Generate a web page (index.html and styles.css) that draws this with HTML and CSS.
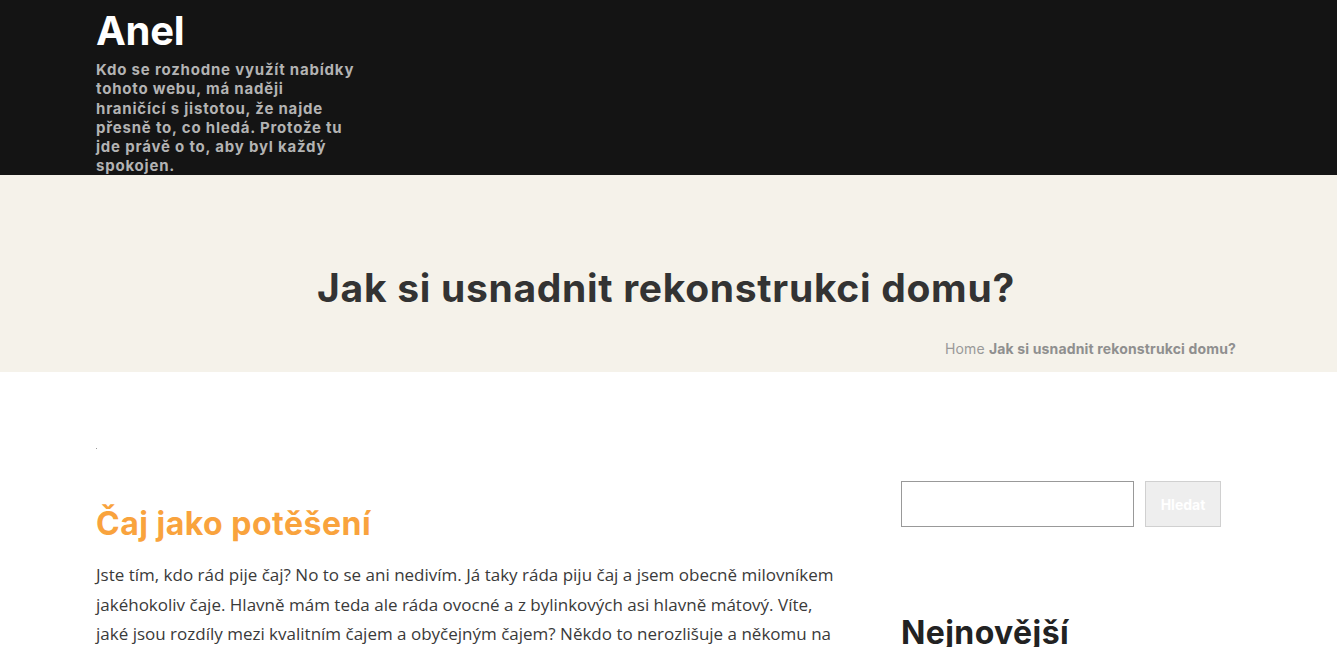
FILE: index.html
```html
<!DOCTYPE html>
<html lang="cs">
<head>
  <meta charset="UTF-8" />
  <meta name="viewport" content="width=device-width, initial-scale=1.0" />
  <title>Jak si usnadnit rekonstrukci domu? - Anel</title>
  <link rel="stylesheet" href="styles.css">
</head>
<body>
  <header class="site-header">
    <div class="container">
      <div class="site-title">Anel</div>
      <p class="site-desc">Kdo se rozhodne využít nabídky tohoto webu, má naději hraničící s jistotou, že najde přesně to, co hledá. Protože tu jde právě o to, aby byl každý spokojen.</p>
    </div>
  </header>

  <section class="page-head">
    <div class="container">
      <h1>Jak si usnadnit rekonstrukci domu?</h1>
      <div class="crumbs">Home <strong>Jak si usnadnit rekonstrukci domu?</strong></div>
    </div>
  </section>

  <div class="container main">
    <article class="post">
      <span class="pixel"></span>
      <h2>Čaj jako potěšení</h2>
      <p>Jste tím, kdo rád pije čaj? No to se ani nedivím. Já taky ráda piju čaj a jsem obecně milovníkem jakéhokoliv čaje. Hlavně mám teda ale ráda ovocné a z bylinkových asi hlavně mátový. Víte, jaké jsou rozdíly mezi kvalitním čajem a obyčejným čajem? Někdo to nerozlišuje a někomu na tom vůbec nezáleží, ale pro mě je to důležité.</p>
    </article>

    <aside class="sidebar">
      <form class="search" onsubmit="return false">
        <input type="text" />
        <button type="submit">Hledat</button>
      </form>
      <h3>Nejnovější</h3>
    </aside>
  </div>
</body>
</html>
```

FILE: styles.css
```css
body {
  font-family: 'Open Sans', sans-serif;
  margin: 0;
  background: #fff;
  color: #333;
}
.container {
  width: 1145px;
  margin: 0 auto;
  box-sizing: border-box;
  padding-right: 5px;
}
.site-header {
  background: #141414;
  height: 175px;
  overflow: hidden;
}
.site-title {
  font-family: 'Inter', sans-serif;
  font-weight: 700;
  font-size: 40px;
  line-height: 48px;
  color: #fff;
  padding-top: 7px;
  letter-spacing: -0.3px;
}
.site-desc {
  font-family: 'Inter', sans-serif;
  font-weight: 700;
  font-size: 15px;
  line-height: 19.3px;
  letter-spacing: 0.8px;
  color: #b3b3b3;
  width: 261px;
  margin: 5px 0 0;
}
.page-head {
  background: #f5f2ea;
  height: 197px;
}
.page-head h1 {
  font-family: 'Inter', sans-serif;
  font-weight: 700;
  font-size: 39px;
  letter-spacing: 0.7px;
  color: #333;
  text-align: center;
  margin: 0;
  padding-top: 88px;
  line-height: 50px;
}
.crumbs {
  text-align: right;
  font-family: 'Inter', sans-serif;
  font-size: 14px;
  letter-spacing: 0.15px;
  color: #999;
  margin-top: 27px;
}
.crumbs strong {
  color: #8f8f8f;
}
.main {
  display: grid;
  grid-template-columns: 745px 335px;
  column-gap: 60px;
  padding-top: 76px;
}
.pixel {
  display: block;
  width: 1px;
  height: 1px;
  background: #999;
}
.post h2 {
  font-family: 'Inter', sans-serif;
  font-weight: 700;
  font-size: 32px;
  letter-spacing: 0.5px;
  color: #f9a33d;
  margin: 53px 0 0;
  line-height: 44px;
}
.post p {
  font-size: 17px;
  line-height: 29.5px;
  color: #3a3a3a;
  margin: 14px 0 0;
}
.search {
  display: flex;
  gap: 11px;
  margin-top: 33px;
}
.search input {
  width: 233px;
  height: 46px;
  box-sizing: border-box;
  border: 1px solid #999;
  padding: 0 10px;
}
.search button {
  width: 76px;
  height: 46px;
  background: #eee;
  border: 1px solid #d0d0d0;
  color: #fff;
  font-family: 'Inter', sans-serif;
  font-weight: 700;
  font-size: 14px;
}
.sidebar h3 {
  font-family: 'Inter', sans-serif;
  font-weight: 700;
  font-size: 32px;
  letter-spacing: 0.4px;
  color: #222;
  margin: 86px 0 0;
}
```
